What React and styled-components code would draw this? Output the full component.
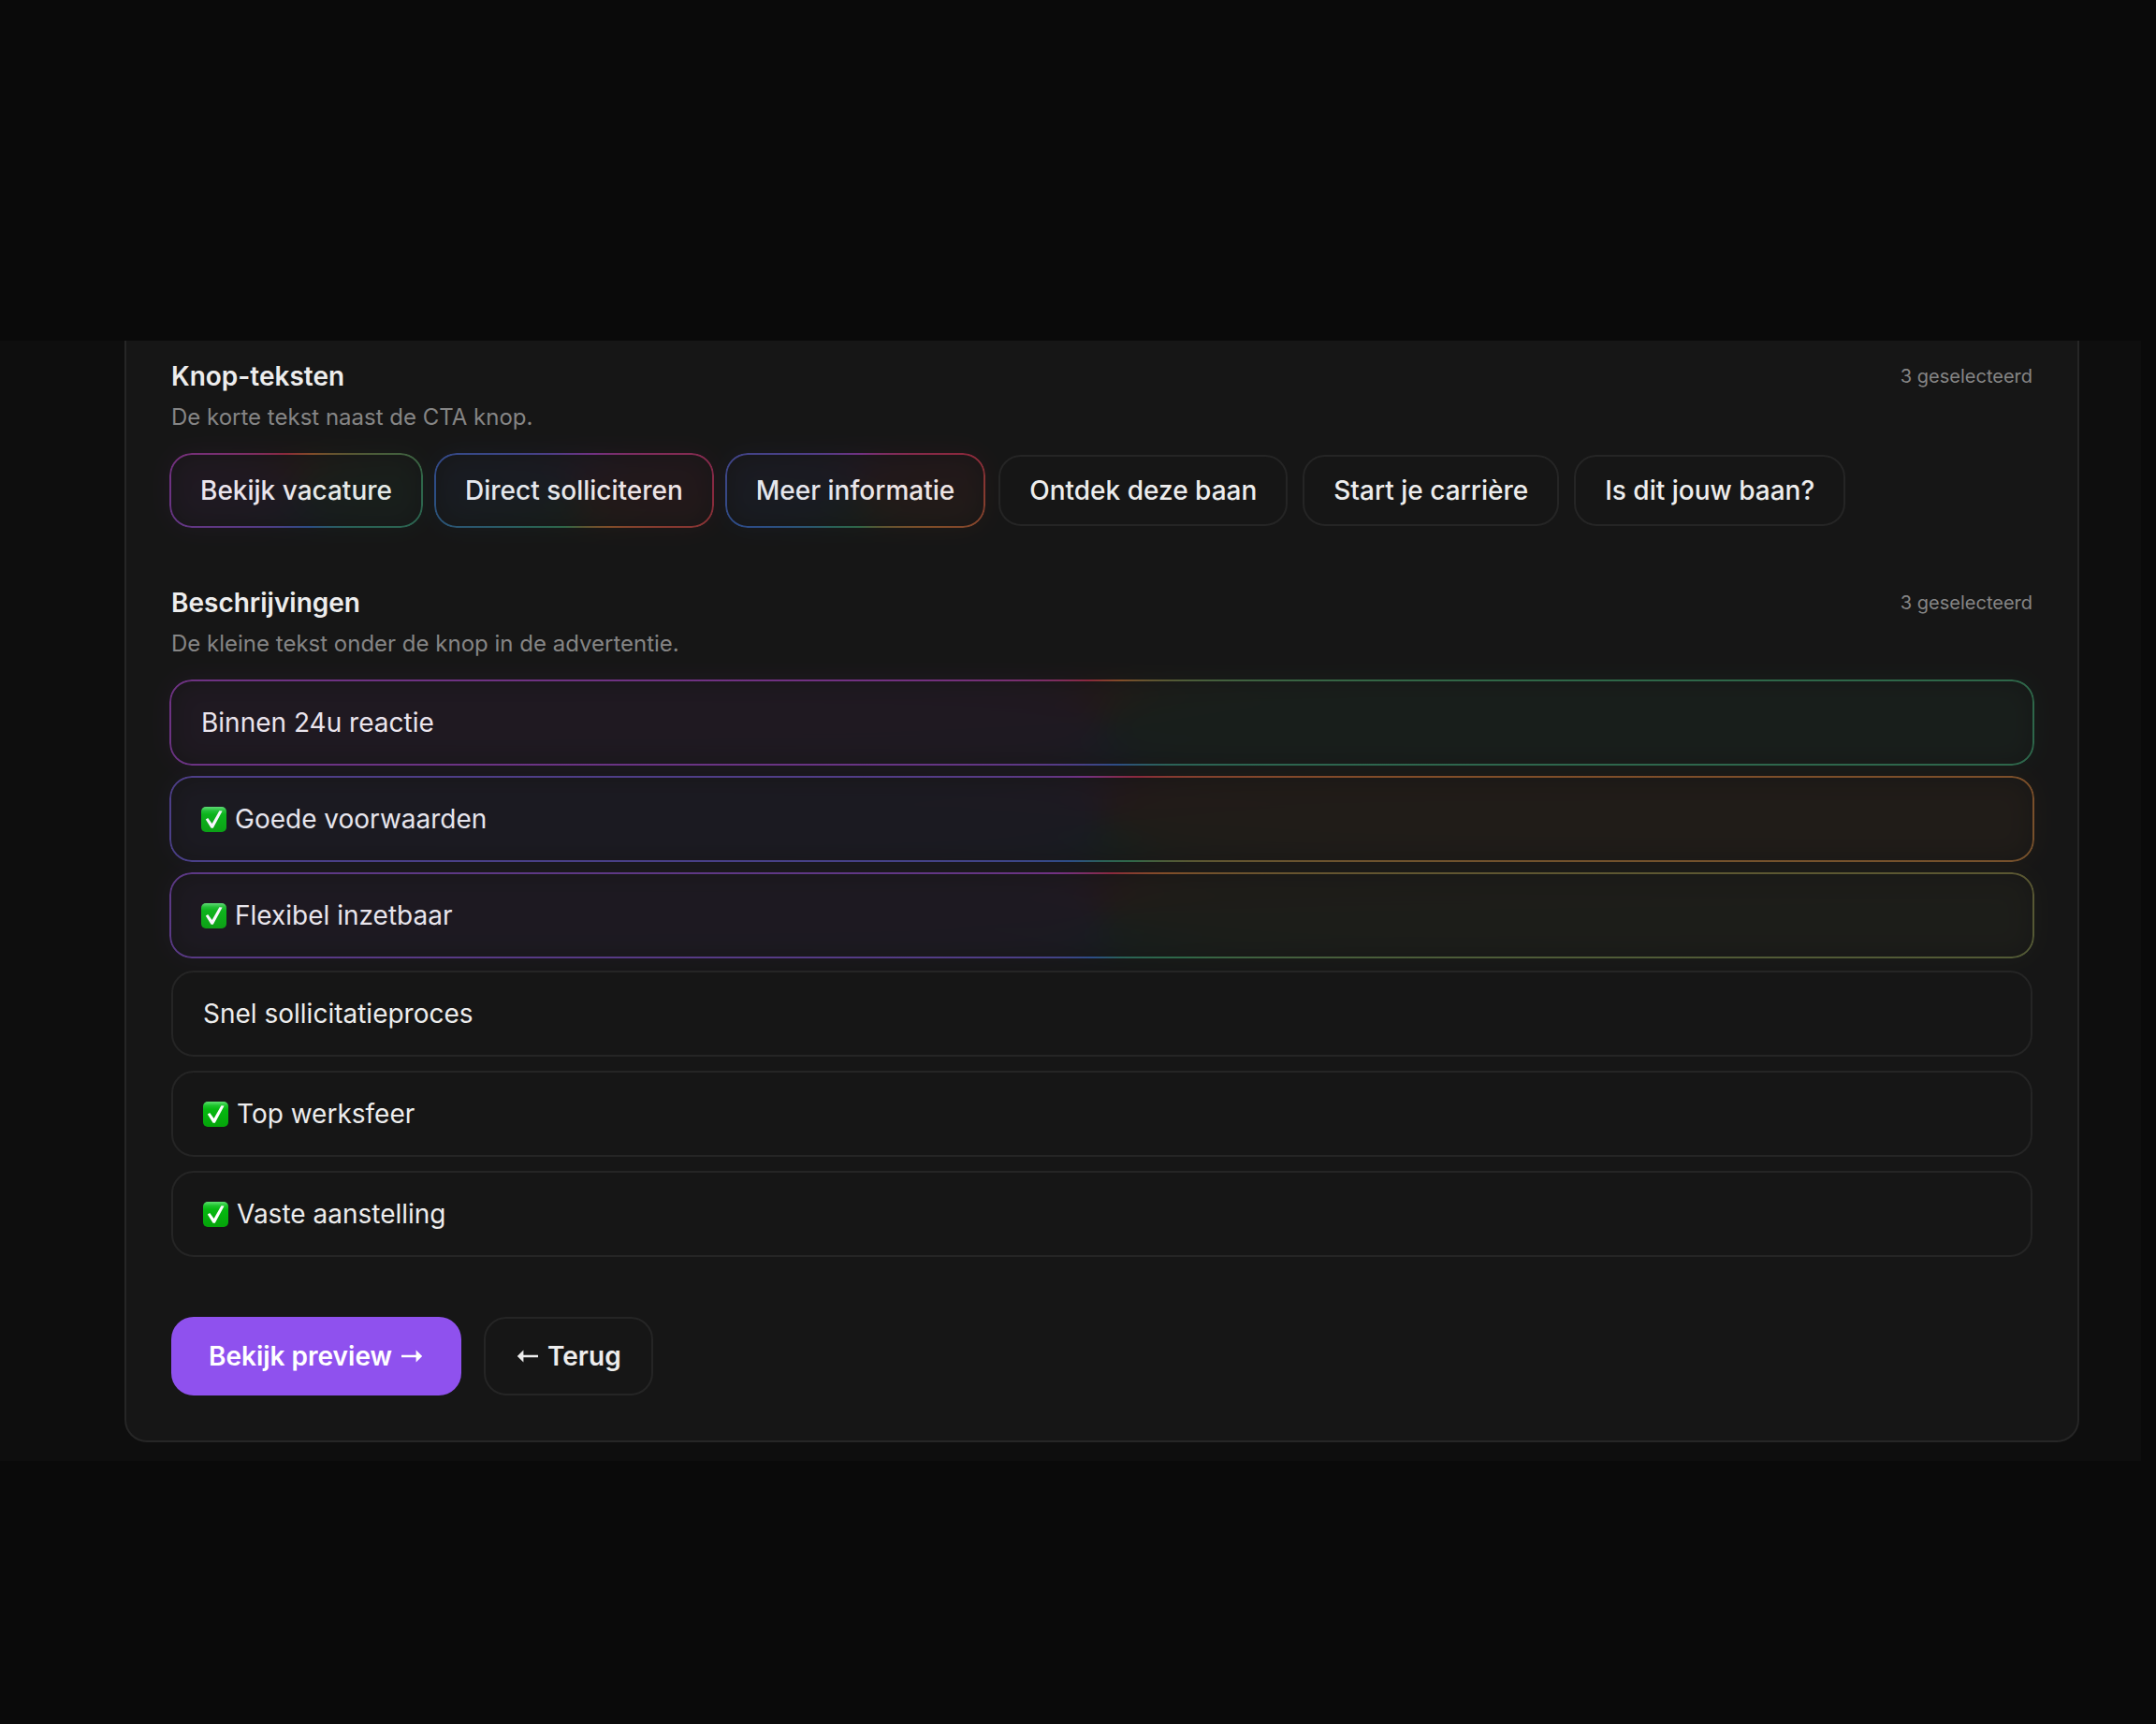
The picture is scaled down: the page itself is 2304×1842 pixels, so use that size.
import React, { useState } from 'react'
import styled, { createGlobalStyle } from 'styled-components'


const buttonTexts = [
  { text: "Bekijk vacature", angle: 0 },
  { text: "Direct solliciteren", angle: 110 },
  { text: "Meer informatie", angle: 90 },
  { text: "Ontdek deze baan", angle: 20 },
  { text: "Start je carrière", angle: 60 },
  { text: "Is dit jouw baan?", angle: 130 },
]

const descriptions = [
  { text: "Binnen 24u reactie", angle: 0 },
  { text: "Goede voorwaarden", angle: 58, check: true },
  { text: "Flexibel inzetbaar", angle: 32, check: true },
  { text: "Snel sollicitatieproces", angle: 20 },
  { text: "Top werksfeer", angle: 70, check: true },
  { text: "Vaste aanstelling", angle: 100, check: true },
]

function CheckMark() {
  return (
    <CheckIcon viewBox="0 0 27 27" role="img" aria-label="✅">
      <defs>
        <linearGradient id="checkFill" x1="0" y1="0" x2="0" y2="1">
          <stop offset="0" stopColor="#5fe070" />
          <stop offset="0.16" stopColor="#1cc52c" />
          <stop offset="0.3" stopColor="#06b911" />
          <stop offset="1" stopColor="#05a40a" />
        </linearGradient>
      </defs>
      <rect width="27" height="27" rx="5" fill="url(#checkFill)" />
      <path d="M4.8 13.6 L7.2 12 L11.6 18 L19.4 4.2 L22.6 4.4 L12.8 22.8 L10.6 22.8 Z" fill="#ffffff" />
    </CheckIcon>
  )
}

function ArrowRight() {
  return (
    <ArrowIcon viewBox="0 0 26 14" aria-hidden="true">
      <path d="M2 5.8 H17.6 V0.6 L24.2 7 L17.6 13.4 V8.2 H2 Z" />
    </ArrowIcon>
  )
}

function ArrowLeft() {
  return (
    <ArrowIcon viewBox="0 0 26 14" aria-hidden="true">
      <path d="M24 5.8 H8.4 V0.6 L1.8 7 L8.4 13.4 V8.2 H24 Z" />
    </ArrowIcon>
  )
}

function SectionHead({ id, title, hint, count }) {
  return (
    <div>
      <TitleRow>
        <Title id={id}>{title}</Title>
        <Count>{count} geselecteerd</Count>
      </TitleRow>
      <Hint>{hint}</Hint>
    </div>
  )
}

export default function App() {
  const [buttons, setButtons] = useState([0, 1, 2])
  const [rows, setRows] = useState([0, 1, 2])

  const toggle = (list, setList, index) => {
    setList(list.includes(index) ? list.filter((i) => i !== index) : [...list, index])
  }

  return (
    <>
      <GlobalStyle />
      <Page>
        <Band>
          <Card>

            <section>
              <SectionHead
                id="knop-teksten"
                title="Knop-teksten"
                hint="De korte tekst naast de CTA knop."
                count={buttons.length}
              />
              <ChipList role="group" aria-labelledby="knop-teksten">
                {buttonTexts.map((item, index) => (
                  <Chip
                    key={item.text}
                    type="button"
                    $selected={buttons.includes(index)}
                    $angle={item.angle}
                    aria-pressed={buttons.includes(index)}
                    onClick={() => toggle(buttons, setButtons, index)}
                  >
                    {item.text}
                  </Chip>
                ))}
              </ChipList>
            </section>

            <section>
              <SectionHead
                id="beschrijvingen"
                title="Beschrijvingen"
                hint="De kleine tekst onder de knop in de advertentie."
                count={rows.length}
              />
              <RowList role="group" aria-labelledby="beschrijvingen">
                {descriptions.map((item, index) => (
                  <Row
                    key={item.text}
                    type="button"
                    $selected={rows.includes(index)}
                    $angle={item.angle}
                    aria-pressed={rows.includes(index)}
                    onClick={() => toggle(rows, setRows, index)}
                  >
                    {item.check && <CheckMark />}
                    {item.text}
                  </Row>
                ))}
              </RowList>
            </section>

            <Actions>
              <Primary type="button">
                Bekijk preview
                <ArrowRight />
              </Primary>
              <Secondary type="button">
                <ArrowLeft />
                Terug
              </Secondary>
            </Actions>

          </Card>
        </Band>
      </Page>
    </>
  )
}


const GlobalStyle = createGlobalStyle`
  * {
    box-sizing: border-box;
  }
  body {
    margin: 0;
    background: #0a0a0a;
    color: #ededed;
    font-family: Inter, "Liberation Sans", sans-serif;
  }
  button {
    font-family: inherit;
    color: inherit;
    cursor: pointer;
  }
`

const Page = styled.main`
  padding: 364px 16px 64px 0;
  @media screen and (max-width: 900px) {
    padding: 40px 0;
  }
`

const Band = styled.div`
  padding: 0 66px 20px 133px;
  background: #0e0e0e;
  @media screen and (max-width: 900px) {
    padding: 0 16px 16px;
  }
`

const Card = styled.div`
  display: flex;
  flex-direction: column;
  gap: 64px;
  padding: 20px 48px 48px;
  background: #161616;
  border: 2px solid #262626;
  border-top: none;
  border-radius: 0 0 24px 24px;
`

const TitleRow = styled.div`
  display: flex;
  align-items: center;
  justify-content: space-between;
`

const Title = styled.h2`
  margin: 0;
  font-size: 28px;
  line-height: 36px;
  font-weight: 600;
`

const Count = styled.span`
  font-size: 20px;
  color: #858585;
`

const Hint = styled.p`
  margin: 8px 0 22px;
  font-size: 24px;
  line-height: 36px;
  color: #858585;
`

const ChipList = styled.div`
  display: flex;
  flex-wrap: wrap;
  gap: 16px;
`

const RowList = styled.div`
  display: flex;
  flex-direction: column;
  gap: 15px;
`

const Option = styled.button`
  position: relative;
  background: #161616;
  border: ${(p) => (p.$selected ? "none" : "2px solid #252525")};
  border-radius: ${(p) => (p.$selected ? "22px" : "24px")};
  font-size: 28px;
  line-height: 36px;

  &::before,
  &::after {
    content: "";
    display: ${(p) => (p.$selected ? "block" : "none")};
    position: absolute;
    inset: -2px;
    border-radius: 24px;
    pointer-events: none;
    background: conic-gradient(
      from ${(p) => p.$angle}deg,
      #f05a4a 0deg,
      #e6823a 25deg,
      #96964f 57deg,
      #46b478 85deg,
      #3caa96 122deg,
      #4182f0 160deg,
      #8264f0 215deg,
      #c84be6 280deg,
      #f83a62 342deg,
      #f05a4a 360deg
    );
  }

  /* soft colour wash and glow */
  &::before {
    filter: blur(14px);
    opacity: 0.05;
  }

  /* thin coloured ring */
  &::after {
    padding: 2px;
    opacity: 0.5;
    mask: linear-gradient(#000 0 0) content-box exclude, linear-gradient(#000 0 0);
  }
`

const Chip = styled(Option)`
  min-height: 76px;
  padding: 0 31px;
  font-weight: 500;
`

const Row = styled(Option)`
  display: flex;
  align-items: center;
  gap: 9px;
  width: 100%;
  height: ${(p) => (p.$selected ? "88px" : "92px")};
  padding: 0 32px;
  font-weight: 400;
  text-align: left;
`

const CheckIcon = styled.svg`
  flex: none;
  width: 27px;
  height: 27px;
`

const Actions = styled.div`
  display: flex;
  flex-wrap: wrap;
  gap: 24px;
`

const Action = styled.button`
  display: flex;
  align-items: center;
  gap: 8px;
  height: 84px;
  border-radius: 24px;
  font-size: 28px;
  font-weight: 600;
`

const Primary = styled(Action)`
  padding: 0 40px;
  background: #8f51ee;
  border: none;
  color: #ffffff;
`

const Secondary = styled(Action)`
  padding: 0 32px;
  background: #161616;
  border: 2px solid #252525;
`

const ArrowIcon = styled.svg`
  flex: none;
  width: 26px;
  height: 14px;
  fill: currentColor;
`
